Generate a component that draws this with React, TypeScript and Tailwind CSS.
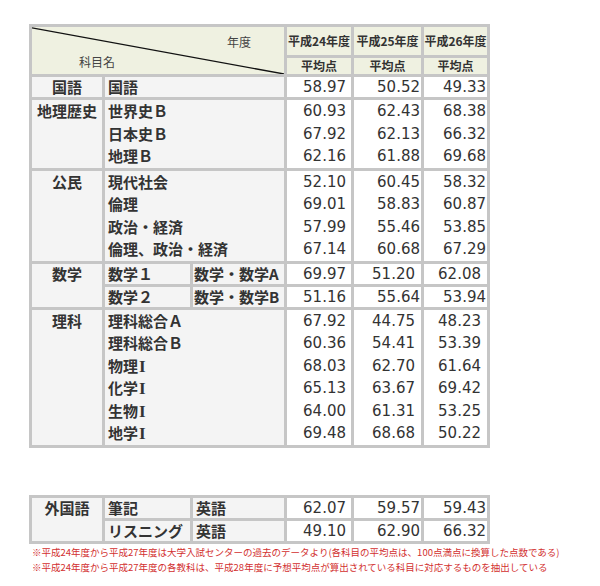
import React from 'react';

type Group = {
  category: string;
  subjects: React.ReactNode[];
  scores: [string, string, string][];
  narrow?: boolean;
};

const jp = { fontFamily: '"Noto Sans CJK JP", "Noto Sans", sans-serif' };
const num = { fontFamily: '"DejaVu Sans", Verdana, sans-serif' };

// roman numeral I as drawn in the source (narrow, with serifs)
const RomanOne = () => <span className="font-['Liberation_Serif',serif] pl-[1px] text-[17px] leading-none">I</span>;

const groups: Group[] = [
  { category: '地理歴史', subjects: ['世界史Ｂ', '日本史Ｂ', '地理Ｂ'], scores: [['60.93', '62.43', '68.38'], ['67.92', '62.13', '66.32'], ['62.16', '61.88', '69.68']] },
  {
    category: '公民',
    subjects: ['現代社会', '倫理', '政治・経済', '倫理、政治・経済'],
    scores: [['52.10', '60.45', '58.32'], ['69.01', '58.83', '60.87'], ['57.99', '55.46', '53.85'], ['67.14', '60.68', '67.29']],
  },
];

const science: Group = {
  category: '理科',
  subjects: [
    '理科総合Ａ',
    '理科総合Ｂ',
    <>物理<RomanOne /></>,
    <>化学<RomanOne /></>,
    <>生物<RomanOne /></>,
    <>地学<RomanOne /></>,
  ],
  scores: [['67.92', '44.75', '48.23'], ['60.36', '54.41', '53.39'], ['68.03', '62.70', '61.64'], ['65.13', '63.67', '69.42'], ['64.00', '61.31', '53.25'], ['69.48', '68.68', '50.22']],
  narrow: true,
};

const border = 'border-[3px] border-[#c6c6c6]';
const label = `${border} bg-[#f4f4f4] text-[15px] font-bold text-[#333] align-top whitespace-nowrap overflow-hidden`;
const cell = `${border} bg-white text-[15px] text-[#333] text-right align-top`;

function NumCells({ rows, narrow }: { rows: [string, string, string][]; narrow?: boolean }) {
  const lh = rows.length > 1 ? 'leading-[22.5px]' : 'leading-[20px]';
  return (
    <>
      {[0, 1, 2].map((c) => (
        <td
          key={c}
          style={num}
          className={`${cell} ${lh} ${c === 0 ? 'pr-[5px]' : narrow ? 'pr-[6px]' : 'pr-[1px]'}`}
        >
          {rows.map((r, i) => (
            <div key={i}>{r[c]}</div>
          ))}
        </td>
      ))}
    </>
  );
}

function GroupRow({ g }: { g: Group }) {
  return (
    <tr>
      <td style={jp} className={`${label} text-center leading-[22.5px]`}>
        {g.category}
      </td>
      <td colSpan={2} style={jp} className={`${label} pl-[3px] leading-[22.5px]`}>
        {g.subjects.map((s, i) => (
          <div key={i}>{s}</div>
        ))}
      </td>
      <NumCells rows={g.scores} narrow={g.narrow} />
    </tr>
  );
}

function Cols() {
  return (
    <colgroup>
      <col className="w-[73px]" />
      <col className="w-[88px]" />
      <col className="w-[94px]" />
      <col className="w-[67px]" />
      <col className="w-[70px]" />
      <col className="w-[66px]" />
    </colgroup>
  );
}

export default function App() {
  const head = `${border} bg-[#eff1e1] text-[12px] font-bold text-[#333] text-center`;
  return (
    <div className="min-h-[586px] w-[600px] bg-white pl-[29px] pt-[24px]" style={jp}>
      <table className="w-[461px] table-fixed border-collapse">
        <Cols />
        <thead>
          <tr>
            <td colSpan={3} rowSpan={2} className={`${border} relative bg-[#eff1e1] p-0`}>
              <svg className="absolute inset-0 h-full w-full" preserveAspectRatio="none" viewBox="0 0 100 100">
                <line x1="0" y1="2" x2="100" y2="100" stroke="#111" strokeWidth="1.3" vectorEffect="non-scaling-stroke" />
              </svg>
              <div className="flex h-[47px] flex-col justify-between text-[12px] text-[#444]">
                <div className="pr-[33px] pt-[6px] text-right">年度</div>
                <div className="pb-[3px] pl-[47px]">科目名</div>
              </div>
            </td>
            <td className={`${head} h-[29px]`}>平成24年度</td>
            <td className={`${head}`}>平成25年度</td>
            <td className={`${head}`}>平成26年度</td>
          </tr>
          <tr>
            <td className={`${head} h-[15px] leading-[15px]`}>平均点</td>
            <td className={`${head} leading-[15px]`}>平均点</td>
            <td className={`${head} leading-[15px]`}>平均点</td>
          </tr>
        </thead>
        <tbody>
          <tr>
            <td className={`${label} text-center leading-[20px]`}>国語</td>
            <td colSpan={2} className={`${label} pl-[3px] leading-[20px]`}>国語</td>
            <NumCells rows={[['58.97', '50.52', '49.33']]} />
          </tr>
          {groups.map((g) => (
            <GroupRow key={g.category} g={g} />
          ))}
          <tr>
            <td rowSpan={2} className={`${label} text-center leading-[20px]`}>数学</td>
            <td className={`${label} pl-[3px] leading-[20px]`}>数学１</td>
            <td className={`${label} pl-[1px] leading-[20px]`}>数学・数学A</td>
            <NumCells rows={[['69.97', '51.20', '62.08']]} narrow />
          </tr>
          <tr>
            <td className={`${label} pl-[3px] leading-[20px]`}>数学２</td>
            <td className={`${label} pl-[1px] leading-[20px]`}>数学・数学B</td>
            <NumCells rows={[['51.16', '55.64', '53.94']]} />
          </tr>
          <GroupRow g={science} />
        </tbody>
      </table>

      <table className="mt-[47px] w-[461px] table-fixed border-collapse">
        <Cols />
        <tbody>
          <tr>
            <td rowSpan={2} className={`${label} text-center leading-[20px]`}>外国語</td>
            <td className={`${label} pl-[3px] leading-[20px]`}>筆記</td>
            <td className={`${label} pl-[3px] leading-[20px]`}>英語</td>
            <NumCells rows={[['62.07', '59.57', '59.43']]} />
          </tr>
          <tr>
            <td className={`${label} pl-[3px] leading-[20px]`}>リスニング</td>
            <td className={`${label} pl-[3px] leading-[20px]`}>英語</td>
            <NumCells rows={[['49.10', '62.90', '66.32']]} />
          </tr>
        </tbody>
      </table>

      <div className="pl-[3px] pt-[1px] text-[9.5px] leading-[15px] text-[#d2302f]">
        <p>※平成24年度から平成27年度は大学入試センターの過去のデータより(各科目の平均点は、100点満点に換算した点数である)</p>
        <p>※平成24年度から平成27年度の各教科は、平成28年度に予想平均点が算出されている科目に対応するものを抽出している</p>
      </div>
    </div>
  );
}
